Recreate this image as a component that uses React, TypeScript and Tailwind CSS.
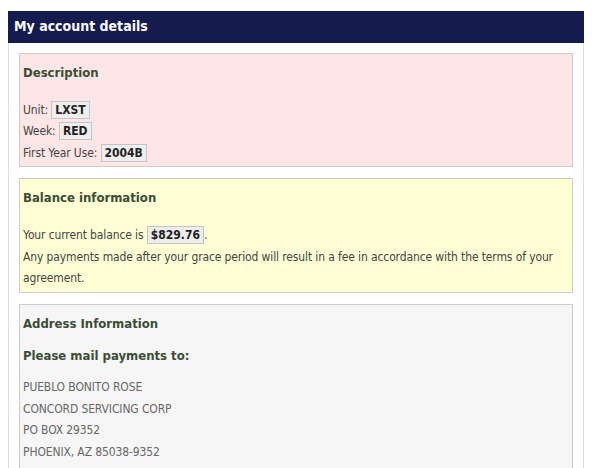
function Val({ children }: { children: React.ReactNode }) {
  return (
    <span className="inline-block border border-[#c4c4c4] bg-[#eeeeee] px-[3px] leading-[16px] font-bold text-[#222] tracking-normal">
      {children}
    </span>
  );
}

function Box({ bg, title, children }: { bg: string; title: string; children: React.ReactNode }) {
  return (
    <div className={`border border-[#cccccc] ${bg} px-[3px] pt-[8px] pb-[2px]`}>
      <div className="text-[13px] font-bold leading-[21.6px] text-[#3b4c36] tracking-normal">{title}</div>
      {children}
    </div>
  );
}

export default function App() {
  return (
    <div className="pt-[11px] px-2 font-['DejaVu_Sans_Condensed','DejaVu_Sans',sans-serif] text-[12px] leading-[21.6px] tracking-[-0.12px] text-[#444]">
      <div className="w-[576px]">
        <div className="flex h-[32px] items-center bg-[#151a4f] pl-[6px] text-[14px] font-bold tracking-normal text-white">
          My account details
        </div>
        <div className="flex flex-col gap-[11px] border-x border-[#dddddd] px-[10px] pt-[10px]">
          <Box bg="bg-[#ffe6e6]" title="Description">
            <div className="mt-[16px]">
              <div>
                Unit: <Val>LXST</Val>
              </div>
              <div>
                Week: <Val>RED</Val>
              </div>
              <div>
                First Year Use: <Val>2004B</Val>
              </div>
            </div>
          </Box>
          <Box bg="bg-[#ffffd5]" title="Balance information">
            <div className="mt-[16px]">
              <div>
                Your current balance is <Val>$829.76</Val>.
              </div>
              <div>
                Any payments made after your grace period will result in a fee in accordance with the terms of your
                agreement.
              </div>
            </div>
          </Box>
          <div className="border border-[#cccccc] bg-[#f6f6f6] px-[3px] pt-[8px] pb-[12px]">
            <div className="text-[13px] font-bold leading-[21.6px] text-[#3b4c36] tracking-normal">
              Address Information
            </div>
            <div className="mt-[10.6px] text-[13px] font-bold leading-[21.6px] text-[#3b4c36] tracking-normal">
              Please mail payments to:
            </div>
            <div className="mt-[10.7px] text-[#666]">
              <div>PUEBLO BONITO ROSE</div>
              <div>CONCORD SERVICING CORP</div>
              <div>PO BOX 29352</div>
              <div>PHOENIX, AZ 85038-9352</div>
            </div>
          </div>
        </div>
      </div>
    </div>
  );
}
